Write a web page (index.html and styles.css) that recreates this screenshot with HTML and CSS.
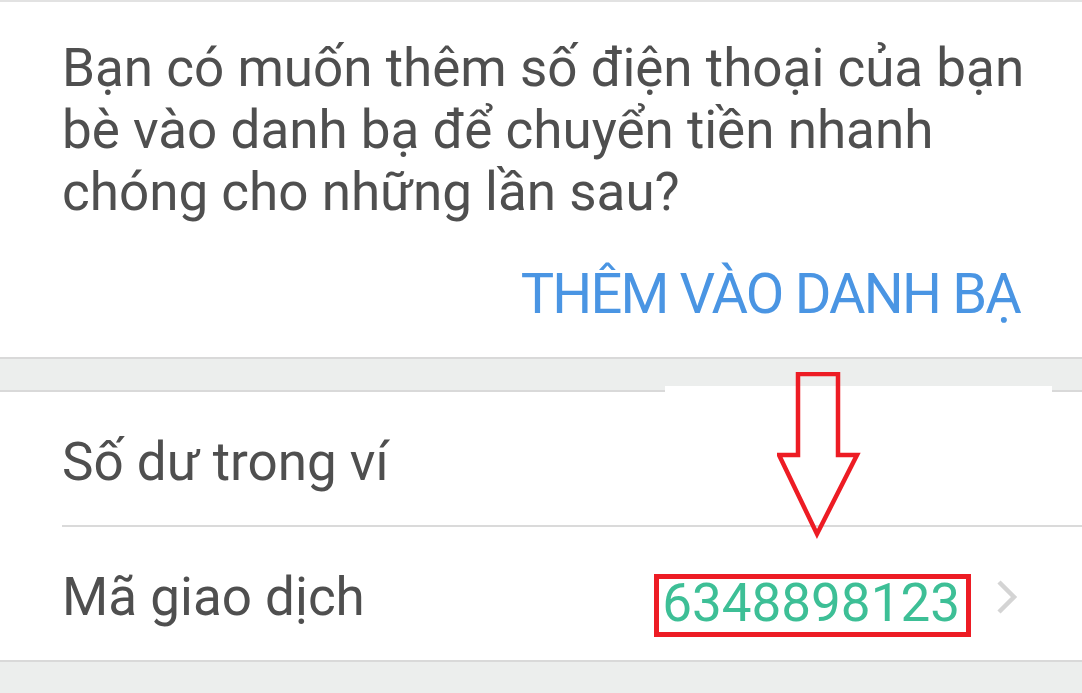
FILE: index.html
```html
<!DOCTYPE html>
<html lang="vi">
<head>
<meta charset="utf-8">
<title>Giao dịch</title>
<link rel="stylesheet" href="styles.css">
</head>
<body>
<div class="screen">
  <section class="card prompt">
    <p class="prompt-text">Bạn có muốn thêm số điện thoại của bạn<br>bè vào danh bạ để chuyển tiền nhanh<br>chóng cho những lần sau?</p>
    <div class="actions"><span class="action">THÊM VÀO DANH BẠ</span></div>
  </section>
  <div class="band"></div>
  <section class="card details">
    <div class="row"><span class="label">Số dư trong ví</span></div>
    <div class="row last">
      <span class="label">Mã giao dịch</span>
      <span class="value-group">
        <span class="value">6348898123</span>
        <svg class="chevron" width="22" height="36" viewBox="0 0 22 36"><path d="M3 3 L18 18 L3 33" fill="none" stroke="#d4d4d4" stroke-width="4.5"/></svg>
      </span>
    </div>
  </section>
  <div class="patch"></div>
  <svg class="arrow" width="90" height="170" viewBox="0 0 90 170">
    <path d="M21 2 L61 2 L61 83 L80 83 L40 162 L2 83 L21 83 Z" fill="none" stroke="#ed1c24" stroke-width="4.5" stroke-linejoin="miter"/>
  </svg>
</div>
</body>
</html>
```
FILE: styles.css
```css
html, body {
  margin: 0;
  padding: 0;
  background: #eceeed;
}
.screen {
  position: relative;
  width: 1082px;
  height: 693px;
  overflow: hidden;
  font-family: Roboto, "Noto Sans", sans-serif;
  border-top: 2px solid #e2e2e2;
  box-sizing: border-box;
}
.card {
  background: #ffffff;
  border-bottom: 2px solid #d9d9d9;
}
.prompt {
  box-sizing: border-box;
  padding: 35px 62px 0 62px;
  height: 357px;
}
.prompt-text {
  margin: 0 -40px 0 0;
  font-size: 53px;
  line-height: 62px;
  color: #4f4f4f;
  white-space: nowrap;
}
.actions {
  display: flex;
  justify-content: flex-end;
  margin-top: 40px;
}
.action {
  font-size: 56px;
  line-height: 62px;
  letter-spacing: -1.8px;
  color: #4a95e3;
}
.band {
  height: 31px;
  border-bottom: 2px solid #d9d9d9;
}
.details {
  padding-left: 62px;
}
.row {
  display: flex;
  align-items: center;
  justify-content: space-between;
  height: 135px;
  border-bottom: 2px solid #dadada;
  padding-right: 64px;
  padding-top: 7px;
  box-sizing: border-box;
}
.row.last {
  border-bottom: none;
  height: 133px;
}
.label {
  font-size: 53px;
  line-height: 62px;
  color: #4f4f4f;
}
.value-group {
  display: flex;
  align-items: center;
  gap: 36px;
}
.value {
  position: relative;
  margin-top: 12px;
  font-size: 53px;
  line-height: 62px;
  color: #3dbf96;
}
.value::after {
  content: "";
  position: absolute;
  left: -8px;
  right: -11px;
  top: 2px;
  bottom: -3px;
  border: 5px solid #ed1c24;
}
.chevron {
  display: block;
}
.patch {
  position: absolute;
  left: 665px;
  top: 384px;
  width: 387px;
  height: 10px;
  background: #ffffff;
}
.arrow {
  position: absolute;
  left: 777px;
  top: 370px;
}
```
